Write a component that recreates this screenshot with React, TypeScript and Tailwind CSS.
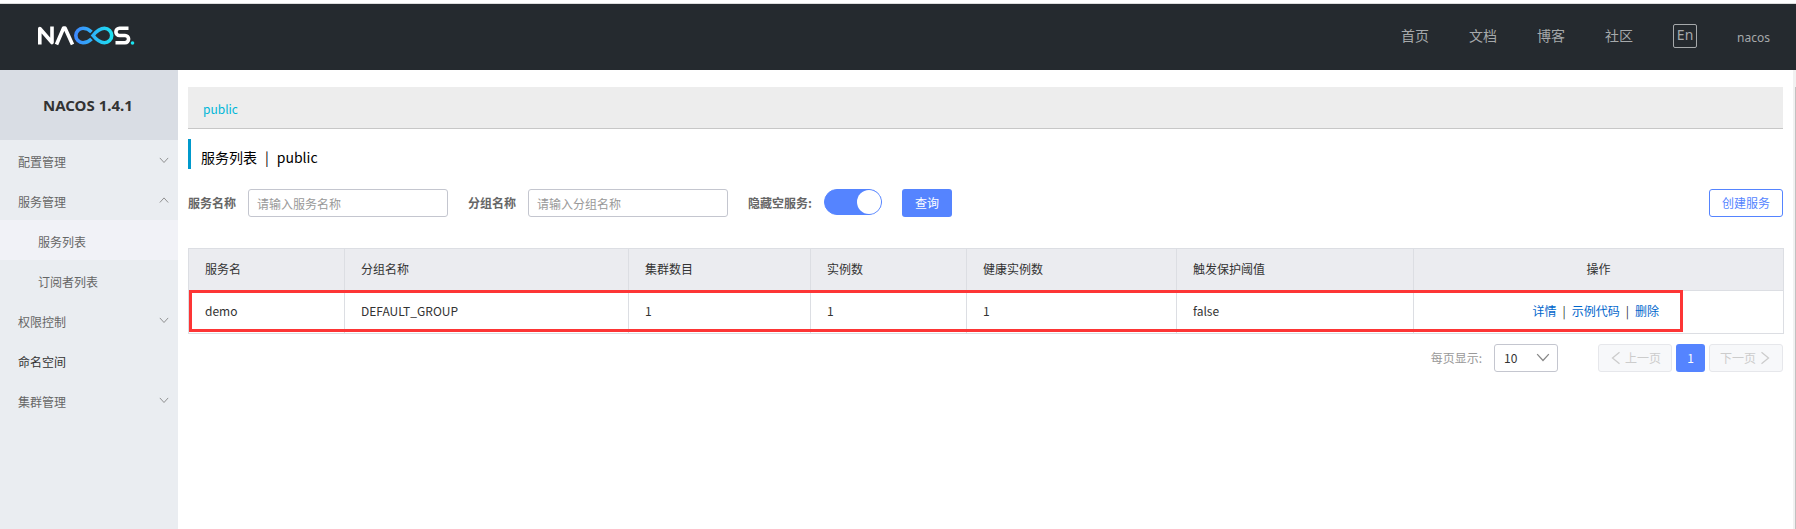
import React from "react";

const MENU = [
  { label: "配置管理", icon: "down" },
  { label: "服务管理", icon: "up" },
  { label: "服务列表", child: true, active: true },
  { label: "订阅者列表", child: true },
  { label: "权限控制", icon: "down" },
  { label: "命名空间", dark: true },
  { label: "集群管理", icon: "down" },
];

const COLUMNS = [
  { title: "服务名", width: "w-[156px]" },
  { title: "分组名称", width: "w-[284px]" },
  { title: "集群数目", width: "w-[182px]" },
  { title: "实例数", width: "w-[156px]" },
  { title: "健康实例数", width: "w-[210px]" },
  { title: "触发保护阈值", width: "w-[237px]" },
  { title: "操作", width: "w-[370px]" },
];

const ROWS = [["demo", "DEFAULT_GROUP", "1", "1", "1", "false"]];

function Chevron({ dir, className }: { dir: "up" | "down" | "left" | "right"; className: string }) {
  const points = {
    up: "1,9 6,3.5 11,9",
    down: "1,3.5 6,9 11,3.5",
    left: "9,1 3,6 9,11",
    right: "3,1 9,6 3,11",
  }[dir];
  return (
    <svg viewBox="0 0 12 12" fill="none" stroke="currentColor" strokeWidth="1.1" className={className} aria-hidden="true">
      <polyline points={points} />
    </svg>
  );
}

function Logo() {
  return (
    <svg viewBox="0 0 98 20" className="h-5 w-[98px]" fill="none" role="img" aria-label="NACOS">
      <defs>
        <linearGradient id="loop" x1="37" y1="0" x2="77" y2="0" gradientUnits="userSpaceOnUse">
          <stop offset="0" stopColor="#3f87ff" />
          <stop offset="1" stopColor="#1be4f0" />
        </linearGradient>
      </defs>
      <g stroke="#fff" strokeWidth="3.6" strokeLinejoin="round">
        <path d="M2.8 18.500V2.500L15 16.500V0.500" />
        <path d="M19.500 18.500L26.600 2h1.400L35.500 18.500" />
        <path d="M91.500 2.300H82.500a3.600 3.600 0 0 0 0 7.200h5.500a3.600 3.600 0 0 1 0 7.200H78.500" />
      </g>
      <g stroke="url(#loop)" strokeWidth="3.6">
        <path d="M54.500 6C52 3.500 49 2.300 46 2.300a7.200 7.200 0 0 0 0 14.400C49 16.700 52 15.500 54.500 13" />
        <path d="M56 9.500C60 4.500 63 2.300 67.500 2.300a7.200 7.200 0 0 1 0 14.400C63 16.700 60 14.500 56 9.500Z" />
      </g>
      <circle cx="95.500" cy="17" r="1.800" fill="#1be4f0" />
    </svg>
  );
}

export default function App() {
  return (
    <div className="flex min-h-screen flex-col bg-white font-['Noto_Sans_CJK_SC',sans-serif] text-xs text-[#333]">
      <div className="h-1 border-b border-[#ddd]" />
      <header className="flex h-[66px] items-center justify-between bg-[#252a2f] pr-[26px] pb-0.5 pl-[37px] font-['Noto_Sans','Noto_Sans_CJK_SC',sans-serif]">
        <a href="#home"><Logo /></a>
        <nav className="flex items-center gap-10 text-sm text-[#a6a9ab]">
          <a href="#home">首页</a>
          <a href="#docs">文档</a>
          <a href="#blog">博客</a>
          <a href="#community">社区</a>
          <button className="flex h-6 w-6 justify-center rounded-xs border border-[#a6a9ab] text-sm leading-5">En</button>
          <a href="#user" className="pt-1 text-xs">nacos</a>
        </nav>
      </header>

      <div className="flex flex-1">
        <aside className="w-[178px] shrink-0 bg-[#eaedf1]">
          <h1 className="flex h-[70px] items-center bg-[#d9dde4] pl-[43px] font-['Noto_Sans',sans-serif] text-[15px] font-bold">NACOS 1.4.1</h1>
          <ul>
            {MENU.map((m) => (
              <li key={m.label} className={m.active ? "bg-[#f1f2f7]" : ""}>
                <a
                  href="#menu"
                  className={
                    "flex h-10 items-center justify-between pt-1 pr-[9px] " +
                    (m.child ? "pl-[38px] " : "pl-[18px] ") +
                    (m.dark ? "text-[#333]" : "text-[#666]")
                  }
                >
                  {m.label}
                  {m.icon && <Chevron dir={m.icon as "up" | "down"} className="mb-1 size-[10px] text-[#888]" />}
                </a>
              </li>
            ))}
          </ul>
        </aside>

        <main className="min-w-0 flex-1 px-[10px] pt-[17px]">
          <div className="flex h-[42px] items-center border-b border-[#c7c7c7] bg-[#ededed] px-[15px] pt-0.5">
            <a href="#public" className="text-[#00b7d8]">public</a>
          </div>

          <h2 className="mt-[10px] flex h-[30px] items-center gap-2 border-l-[3px] border-[#09c] pt-1.5 pl-[10px] text-sm text-black">
            <span>服务列表</span>
            <span>|</span>
            <span>public</span>
          </h2>

          <form className="mt-5 flex h-7 items-center" onSubmit={(e) => e.preventDefault()}>
            <label htmlFor="service" className="mr-3 font-bold text-[#666]">服务名称</label>
            <input id="service" placeholder="请输入服务名称" className="mr-5 h-7 w-[200px] rounded-[3px] border border-[#c4c6cf] px-2 placeholder:text-[#999]" />
            <label htmlFor="group" className="mr-3 font-bold text-[#666]">分组名称</label>
            <input id="group" placeholder="请输入分组名称" className="mr-5 h-7 w-[200px] rounded-[3px] border border-[#c4c6cf] px-2 placeholder:text-[#999]" />
            <label htmlFor="hide" className="mr-3 font-bold text-[#666]">隐藏空服务:</label>
            <input
              id="hide"
              type="checkbox"
              role="switch"
              defaultChecked
              className="mr-5 mb-0.5 flex h-[26px] w-[58px] appearance-none justify-end rounded-full border border-[#5584ff] bg-[#5584ff] before:size-6 before:rounded-full before:bg-white"
            />
            <button type="submit" className="h-7 w-[50px] rounded-[3px] bg-[#5584ff] text-white">查询</button>
            <button type="button" className="ml-auto h-7 w-[74px] rounded-[3px] border border-[#5584ff] text-[#5584ff]">创建服务</button>
          </form>

          <div className="relative mt-[31px]">
            <table className="w-full table-fixed border-collapse border border-[#dcdee3] text-left">
              <thead>
                <tr className="h-[42px] bg-[#ebecf0]">
                  {COLUMNS.map((c) => (
                    <th key={c.title} className={"border border-[#dcdee3] px-4 pb-0.5 font-normal last:text-center " + c.width}>{c.title}</th>
                  ))}
                </tr>
              </thead>
              <tbody>
                {ROWS.map((r) => (
                  <tr key={r[0]} className="h-[43px]">
                    {r.map((v, i) => (
                      <td key={i} className="border border-[#dcdee3] px-4 pb-0.5">{v}</td>
                    ))}
                    <td className="border border-[#dcdee3] pr-[124px] pb-0.5 text-right whitespace-nowrap">
                      <a href="#detail" className="text-[#06c]">详情</a>
                      <span className="mx-[6px]">|</span>
                      <a href="#code" className="text-[#06c]">示例代码</a>
                      <span className="mx-[6px]">|</span>
                      <a href="#delete" className="text-[#06c]">删除</a>
                    </td>
                  </tr>
                ))}
              </tbody>
            </table>
            <div className="pointer-events-none absolute top-[42px] right-[100px] left-px h-[42px] border-[3px] border-[#fd3535]" />
          </div>

          <div className="mt-[10px] flex h-7 items-center justify-end">
            <label htmlFor="size" className="mr-3 text-[#999]">每页显示:</label>
            <div className="relative mr-10">
              <select id="size" className="h-7 w-16 appearance-none rounded-[3px] border border-[#c4c6cf] bg-white pl-[9px]">
                <option>10</option>
              </select>
              <Chevron dir="down" className="pointer-events-none absolute top-1.5 right-2 size-[14px] text-[#888]" />
            </div>
            <button disabled className="flex h-7 w-[74px] items-center justify-center gap-0.5 rounded-[3px] border border-[#e6e7eb] bg-[#f7f8fa] text-[#ccc]">
              <Chevron dir="left" className="size-[14px]" />
              上一页
            </button>
            <button className="mx-1 h-7 w-[29px] rounded-[3px] bg-[#5584ff] text-white">1</button>
            <button disabled className="flex h-7 w-[74px] items-center justify-center gap-0.5 rounded-[3px] border border-[#e6e7eb] bg-[#f7f8fa] text-[#ccc]">
              下一页
              <Chevron dir="right" className="size-[14px]" />
            </button>
          </div>
        </main>

        <div className="flex w-[3px] flex-col items-end bg-[#f1f1f1] pt-[17px]">
          <div className="w-px flex-1 bg-[#c1c1c1]" />
        </div>
      </div>
    </div>
  );
}
